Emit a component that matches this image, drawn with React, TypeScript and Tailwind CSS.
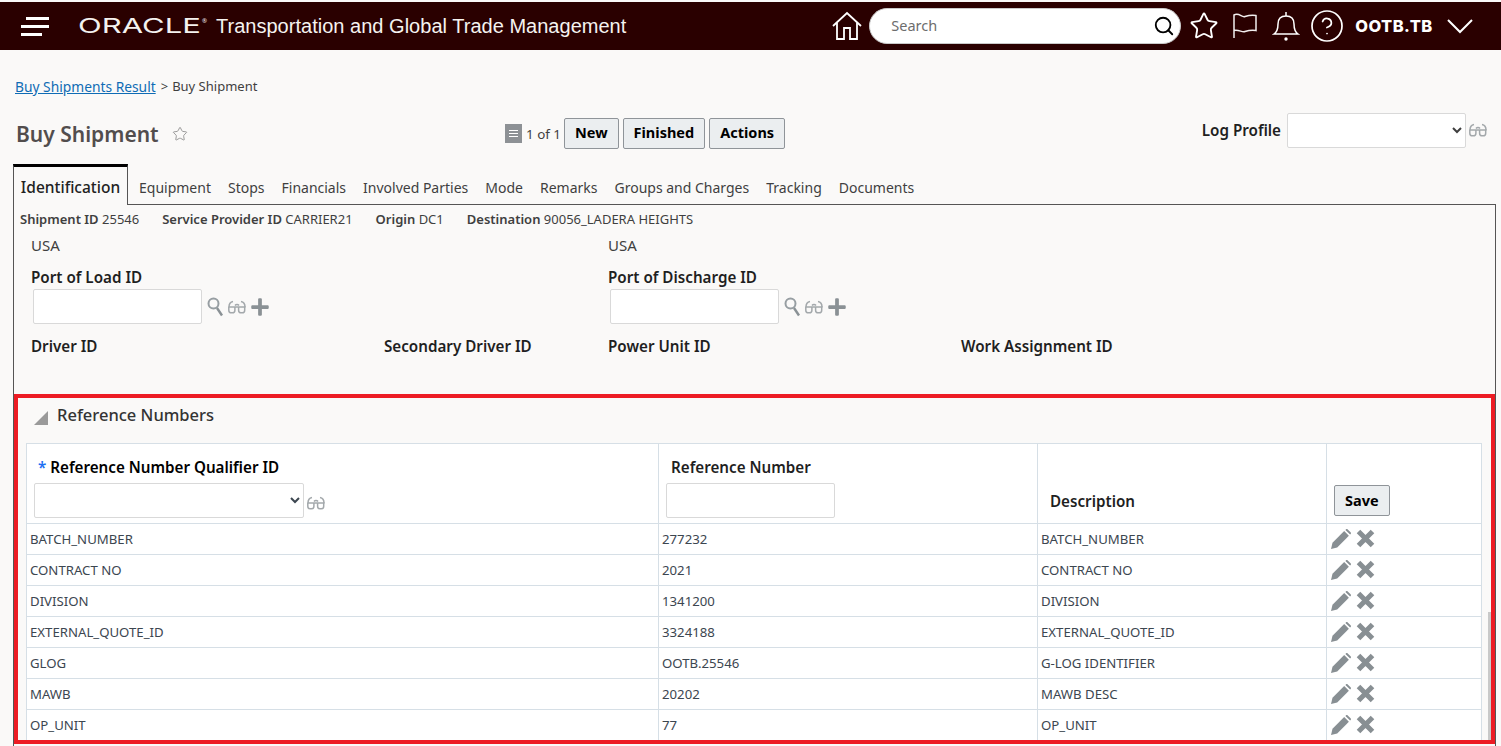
import { CircleHelp, Search, Star } from "lucide-react";
import { FaPlus } from "react-icons/fa";

const tabs = [
  "Equipment",
  "Stops",
  "Financials",
  "Involved Parties",
  "Mode",
  "Remarks",
  "Groups and Charges",
  "Tracking",
  "Documents",
];

const rows = [
  ["BATCH_NUMBER", "277232", "BATCH_NUMBER"],
  ["CONTRACT NO", "2021", "CONTRACT NO"],
  ["DIVISION", "1341200", "DIVISION"],
  ["EXTERNAL_QUOTE_ID", "3324188", "EXTERNAL_QUOTE_ID"],
  ["GLOG", "OOTB.25546", "G-LOG IDENTIFIER"],
  ["MAWB", "20202", "MAWB DESC"],
  ["OP_UNIT", "77", "OP_UNIT"],
];

function Glasses({ className = "" }: { className?: string }) {
  return (
    <svg viewBox="0 0 20 14" className={`h-[14px] w-[20px] ${className}`} fill="none" stroke="#a3a8ab" strokeWidth="1.5">
      <path d="M1.5 7h17" />
      <path d="M1.8 7v3.2c0 1.6 1 2.6 2.6 2.6h.9c1.6 0 2.6-1 2.6-2.6V7" />
      <path d="M11.6 7v3.2c0 1.6 1 2.6 2.6 2.6h.9c1.6 0 2.6-1 2.6-2.6V7" />
      <path d="M2 7c0-3 1.5-5.2 4-5.6" />
      <path d="M18 7c0-3-1.5-5.2-4-5.6" />
      <path d="M8 5.5c1-1.3 3-1.3 4 0" />
    </svg>
  );
}

function Lookup() {
  return (
    <svg viewBox="0 0 16 20" className="h-[20px] w-4" fill="none">
      <circle cx="6.5" cy="6.5" r="5" stroke="#979ea2" strokeWidth="2" />
      <path d="M10 11l5 7.500" stroke="#8a9195" strokeWidth="2.4" />
    </svg>
  );
}

function FieldTools() {
  return (
    <div className="ml-[5px] flex items-center gap-[4px]">
      <Lookup />
      <Glasses />
      <FaPlus className="-ml-[1px] text-[20px] text-[#8a9195]" />
    </div>
  );
}

function ActionButton({ label }: { label: string }) {
  return (
    <button className="h-[31px] rounded-[2px] border border-[#8f9499] bg-[#ebeef0] px-[10px] text-[14.5px] font-bold text-black">
      {label}
    </button>
  );
}

function PencilIcon() {
  return (
    <svg viewBox="0 0 20 20" className="size-[20px]" fill="#888f93">
      <path d="M0 20l1.500-6.200L13.200 2.100l4.700 4.700L6.200 18.500z" />
      <path d="M14.400.9l.5-.5c.5-.5 1.300-.5 1.800 0l2.900 2.900c.5.5.5 1.300 0 1.800l-.5.500z" />
    </svg>
  );
}

function CloseIcon() {
  return (
    <svg viewBox="0 0 19 19" className="size-[19px]" fill="none" stroke="#888f93" strokeWidth="5">
      <path d="M2.500 2.500l14 14M16.500 2.500l-14 14" />
    </svg>
  );
}

function Header() {
  return (
    <header className="mt-[2px] flex h-[48px] items-center bg-[#2a0000] text-white">
      <div className="ml-[21px] flex w-[28px] flex-col gap-[5px]">
        <span className="h-[3px] w-[23px] self-end bg-white" />
        <span className="h-[3px] w-[28px] bg-white" />
        <span className="h-[3px] w-[21px] bg-white" />
      </div>
      <span className="ml-[29px] inline-block w-[124px] origin-left scale-x-[1.55] font-['Inter',sans-serif] text-[20px] leading-none font-normal text-[#f4f2ef]">
        ORACLE
      </span>
      <span className="mb-[10px] w-[5px] text-[6px] leading-none text-[#f4f2ef]">®</span>
      <span className="ml-[9px] font-['Liberation_Sans',sans-serif] text-[20px] tracking-[0.02px] whitespace-nowrap text-[#f5f3f0]">
        Transportation and Global Trade Management
      </span>

      <svg viewBox="0 0 32 30" className="ml-[205px] h-[30px] w-[32px]" fill="none" stroke="white" strokeWidth="1.8">
        <path d="M2 15L16 2l14 13" />
        <path d="M6 12v16h7V17h6v11h7V12" />
      </svg>
      <div className="ml-[6px] flex h-[36px] w-[312px] items-center rounded-full border border-[#c9c9c9] bg-white pr-[5px] pl-[21px]">
        <span className="mb-[1px] flex-1 font-['Noto_Sans',sans-serif] text-[14.5px] text-[#6d6d6d]">Search</span>
        <Search className="size-[22px] text-black" strokeWidth={2} />
      </div>
      <Star className="ml-[8px] size-[30px]" strokeWidth={1.5} />
      <svg viewBox="0 0 26 28" className="ml-[13px] h-[28px] w-[26px]" fill="none" stroke="#f2eeee" strokeWidth="1.5">
        <path d="M2 26V3c5-3 8 3 11 1.5 3-1 6-2 11-1v15c-5-1-8 0-11 1-3 1-6-2-11-1" />
      </svg>
      <svg viewBox="0 0 28 30" className="ml-[14px] h-[30px] w-[28px]" fill="none" stroke="white" strokeWidth="1.5">
        <path d="M2 23c3-2 4-5 4-10 0-5 3-8 8-8s8 3 8 8c0 5 1 8 4 10z" />
        <path d="M14 5V1" />
        <circle cx="14" cy="28" r="1.7" fill="white" stroke="none" />
      </svg>
      <CircleHelp className="ml-[9px] size-[36px]" strokeWidth={1.15} />
      <span className="ml-[10px] font-['Inter',sans-serif] text-[16.5px] font-extrabold tracking-[0.4px]">OOTB.TB</span>
      <svg viewBox="0 0 28 16" className="ml-[13px] h-[16px] w-[28px]" fill="none" stroke="white" strokeWidth="2">
        <path d="M2 2l12 12L26 2" />
      </svg>
    </header>
  );
}

function Field({ label, className = "" }: { label: string; className?: string }) {
  return <span className={`text-[15.2px] font-semibold text-[#1f1f1f] ${className}`}>{label}</span>;
}

function PortField({ label }: { label: string }) {
  return (
    <div className="flex flex-col">
      <span className="text-[15.2px] leading-[20px] font-semibold text-[#1f1f1f]">{label}</span>
      <div className="mt-[2px] ml-[2px] flex items-center">
        <input className="h-[35px] w-[169px] rounded-[2px] border border-[#d9d9d9] bg-white" />
        <FieldTools />
      </div>
    </div>
  );
}

export default function App() {
  return (
    <div className="flex h-[746px] flex-col overflow-hidden bg-[#faf9f8] font-['Noto_Sans',sans-serif] text-[#3f3f3f]">
      <Header />

      <div className="mt-[27px] ml-[15px] flex h-[20px] items-center text-[13px]">
        <a className="text-[13.8px] text-[#0f6cb5] underline">Buy Shipments Result</a>
        <span className="ml-[5px]">&gt;</span>
        <span className="ml-[4px] text-[13px]">Buy Shipment</span>
      </div>

      <div className="mt-[17px] flex h-[40px] items-center">
        <h1 className="mt-[2px] ml-[16px] w-[156px] text-[21px] font-semibold text-[#524d4d]">Buy Shipment</h1>
        <Star className="size-[16px] text-[#9b9b9b]" strokeWidth={1.5} />
        <div className="mb-[2px] ml-[317px] flex h-[19px] w-[17px] flex-col justify-center gap-[2px] bg-[#8d9195] p-[4px]">
          <span className="h-[1px] bg-white" />
          <span className="h-[1px] bg-white" />
          <span className="h-[1px] bg-white" />
        </div>
        <span className="ml-[4px] text-[13.4px]">1 of 1</span>
        <div className="mb-[2px] ml-[3px] flex gap-[4px]">
          <ActionButton label="New" />
          <ActionButton label="Finished" />
          <ActionButton label="Actions" />
        </div>
        <div className="mr-[13px] mb-[8px] ml-auto flex items-center">
          <span className="mr-[6px] text-[15.2px] font-semibold text-[#1f1f1f]">Log Profile</span>
          <select className="h-[35px] w-[179px] rounded-[2px] border border-[#d9d9d9] bg-white text-[13px]" />
          <Glasses className="ml-[2px]" />
        </div>
      </div>

      <nav className="mt-[10px] mr-[5px] ml-[13px] flex h-[41px] items-end border-b border-[#555]">
        <div className="relative -mb-px flex h-[41px] w-[115px] items-center justify-center border-t-[3px] border-r border-l border-t-black border-r-[#555] border-l-[#555] bg-[#faf9f8] pt-[4px] text-[15.5px] font-medium text-[#222]">
          Identification
        </div>
        <div className="ml-[11px] flex h-[40px] items-center gap-[17px] pt-[6px] text-[14px] whitespace-nowrap">
          {tabs.map((tab) => (
            <span key={tab}>{tab}</span>
          ))}
        </div>
      </nav>

      <main className="mr-[5px] ml-[13px] flex flex-1 flex-col border-x border-[#555]">
        <div className="ml-[6px] flex h-[30px] items-center gap-[23px] text-[13px]">
          <span><b className="font-semibold">Shipment ID</b> 25546</span>
          <span><b className="font-semibold">Service Provider ID</b> CARRIER21</span>
          <span><b className="font-semibold">Origin</b> DC1</span>
          <span><b className="font-semibold">Destination</b> 90056_LADERA HEIGHTS</span>
        </div>

        <div className="-mt-[1px] ml-[17px] grid h-[160px] grid-cols-[353px_224px_353px_1fr] content-start">
          <span className="col-span-2 text-[15px] leading-[22px]">USA</span>
          <span className="col-span-2 text-[15px] leading-[22px]">USA</span>
          <div className="col-span-2 mt-[11px]">
            <PortField label="Port of Load ID" />
          </div>
          <div className="col-span-2 mt-[11px]">
            <PortField label="Port of Discharge ID" />
          </div>
          <Field label="Driver ID" className="mt-[11px]" />
          <Field label="Secondary Driver ID" className="mt-[11px]" />
          <Field label="Power Unit ID" className="mt-[11px]" />
          <Field label="Work Assignment ID" className="mt-[11px]" />
        </div>

        <section className="relative h-[350px] shrink-0 overflow-hidden border-4 border-[#ed1c24] pr-[9px] pl-[8px]">
          <div className="flex h-[45px] items-center pb-[10px]">
            <span className="mt-[5px] ml-[8px] size-0 border-t-[14px] border-r-[14px] border-t-transparent border-r-[#9a9a9a]" />
            <h2 className="ml-[9px] text-[16.5px] font-medium text-[#333]">Reference Numbers</h2>
          </div>

          <table className="w-full table-fixed border-collapse bg-white text-[13.2px] text-[#3c4650]">
            <colgroup>
              <col className="w-[632px]" />
              <col className="w-[379px]" />
              <col className="w-[289px]" />
              <col />
            </colgroup>
            <thead>
              <tr className="h-[80px]">
                <th className="border border-[#d6dfe6] pt-[12px] pl-[7px] text-left align-top font-normal">
                  <div className="ml-[4px] text-[15.2px] leading-[22px] font-semibold text-black">
                    <span className="text-[#1d6ff2]">*</span> Reference Number Qualifier ID
                  </div>
                  <div className="mt-[5px] flex items-center">
                    <select className="h-[35px] w-[270px] rounded-[2px] border border-[#d9d9d9] bg-white" />
                    <Glasses className="mt-[4px] ml-[2px]" />
                  </div>
                </th>
                <th className="border border-[#d6dfe6] pt-[12px] pl-[7px] text-left align-top font-normal">
                  <div className="ml-[5px] text-[15.2px] leading-[22px] font-semibold text-[#1f1f1f]">Reference Number</div>
                  <input className="mt-[5px] h-[35px] w-[169px] rounded-[2px] border border-[#d9d9d9] bg-white" />
                </th>
                <th className="border border-[#d6dfe6] pb-[10px] pl-[12px] text-left align-bottom text-[15.2px] font-semibold text-[#1f1f1f]">
                  Description
                </th>
                <th className="border border-[#d6dfe6] pb-[7px] pl-[7px] text-left align-bottom font-normal">
                  <ActionButton label="Save" />
                </th>
              </tr>
            </thead>
            <tbody>
              {rows.map((row) => (
                <tr key={row[0]} className="h-[31px]">
                  <td className="border border-[#d6dfe6] pt-[2px] pl-[3px]">{row[0]}</td>
                  <td className="border border-[#d6dfe6] pt-[2px] pl-[3px]">{row[1]}</td>
                  <td className="border border-[#d6dfe6] pt-[2px] pl-[3px]">{row[2]}</td>
                  <td className="border border-[#d6dfe6] pl-[4px]">
                    <div className="-mt-[1px] flex items-center gap-[5px]">
                      <PencilIcon />
                      <CloseIcon />
                    </div>
                  </td>
                </tr>
              ))}
            </tbody>
          </table>

          <div className="absolute right-0 bottom-0 h-[128px] w-[3px] bg-[#c9c9c9]" />
        </section>
      </main>
    </div>
  );
}
